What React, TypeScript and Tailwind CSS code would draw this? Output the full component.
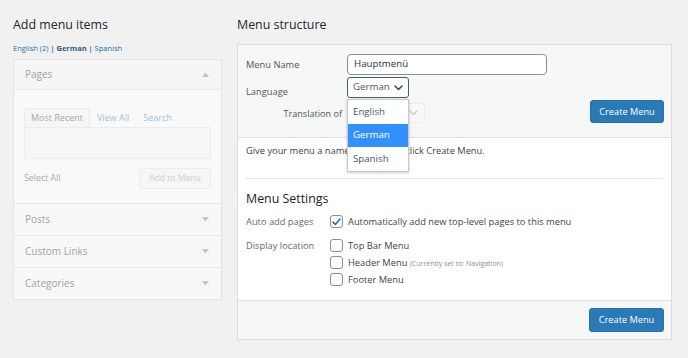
import type { ReactNode } from 'react';

function Tri({ up }: { up?: boolean }) {
  return (
    <svg width="7" height="5" viewBox="0 0 7 5" className="fill-[#c3c4c7]">
      {up ? <path d="M0 5 L3.5 0.5 L7 5 Z" /> : <path d="M0 0 L3.5 4.5 L7 0 Z" />}
    </svg>
  );
}

function Chevron({ className }: { className?: string }) {
  return (
    <svg width="9" height="6" viewBox="0 0 9 6" className={className}>
      <path d="M1 1 L4.5 4.5 L8 1" fill="none" stroke="currentColor" strokeWidth="1.6" strokeLinecap="round" strokeLinejoin="round" />
    </svg>
  );
}

function Box({ checked }: { checked?: boolean }) {
  return (
    <span className="w-[13px] h-[13px] shrink-0 rounded-[3px] border border-[#8c8f94] bg-white flex items-center justify-center">
      {checked && (
        <svg width="9" height="8" viewBox="0 0 9 8">
          <path d="M1 4.2 L3.4 6.5 L8 1" fill="none" stroke="#2271b1" strokeWidth="1.6" strokeLinecap="round" strokeLinejoin="round" />
        </svg>
      )}
    </span>
  );
}

function Row({ label, children }: { label: string; children: ReactNode }) {
  return (
    <div className="flex">
      <div className="w-[84px] shrink-0 text-[9.3px] leading-[16px] text-[#646970]">{label}</div>
      <div className="flex flex-col gap-[1px]">{children}</div>
    </div>
  );
}

function Opt({ checked, children }: { checked?: boolean; children: ReactNode }) {
  return (
    <label className="flex items-center gap-[5px] h-[16px] text-[9.3px] text-[#3c434a]">
      <Box checked={checked} />
      <span>{children}</span>
    </label>
  );
}

function Section({ title, up }: { title: string; up?: boolean }) {
  return (
    <div className="h-[32px] border-t border-[#e8e8e8] flex items-center justify-between pl-[11px] pr-[12px] bg-[#f8f8f8]">
      <span className="text-[10px] text-[#a3a3a3]">{title}</span>
      <Tri up={up} />
    </div>
  );
}

export default function App() {
  return (
    <div className="w-[688px] h-[358px] bg-[#f1f1f1] flex gap-[15px] pl-[13px] font-['Open_Sans',sans-serif] overflow-hidden">
      {/* left column */}
      <div className="w-[209px] shrink-0 flex flex-col">
        <h2 className="mt-[16px] h-[18px] leading-[18px] text-[12.4px] text-[#23282d]">Add menu items</h2>
        <div className="mt-[8px] h-[12px] leading-[12px] text-[7.5px] text-[#2271b1]">
          English (2) <span className="text-[#1d2327]">|</span> <span className="font-bold text-[#2c5e87]">German</span>{' '}
          <span className="text-[#1d2327]">|</span> Spanish
        </div>
        <div className="mt-[5px] border border-[#e3e3e3] bg-[#f8f8f8]">
          <div className="h-[30px] flex items-center justify-between pl-[11px] pr-[12px] border-b border-[#ececec] bg-[#f5f5f5]">
            <span className="text-[10px] text-[#a3a3a3]">Pages</span>
            <Tri up />
          </div>
          <div className="h-[113px] px-[10px] pt-[18px] bg-[#f9f9f9]">
            <div className="flex text-[9px] h-[19px]">
              <div className="w-[66px] border border-b-0 border-[#ececec] bg-[#f6f6f6] text-[#a8a8a8] flex items-center justify-center">
                Most Recent
              </div>
              <div className="px-[7px] flex items-center text-[#9fc3dc]">View All</div>
              <div className="px-[7px] flex items-center text-[#9fc3dc]">Search</div>
            </div>
            <div className="h-[32px] border border-[#ececec] bg-[#f6f6f6]" />
            <div className="mt-[9px] flex items-center justify-between">
              <span className="text-[8.8px] text-[#ababab]">Select All</span>
              <span className="w-[72px] h-[21px] rounded-[3px] border border-[#ececec] bg-[#f6f6f6] text-[8.6px] text-[#cfcfcf] flex items-center justify-center">
                Add to Menu
              </span>
            </div>
          </div>
          <Section title="Posts" />
          <Section title="Custom Links" />
          <Section title="Categories" />
        </div>
      </div>

      {/* right column */}
      <div className="w-[435px] shrink-0 flex flex-col">
        <h2 className="mt-[16px] h-[18px] leading-[18px] text-[12.4px] text-[#23282d]">Menu structure</h2>
        <div className="mt-[10px] border border-[#dcdcde] bg-white">
          <div className="relative bg-[#f6f7f7] border-b border-[#e0e0e0] pl-[8px] pr-[7px] pt-[9px] pb-[14px] flex justify-between items-end">
            <div className="flex flex-col">
              <div className="flex items-center">
                <span className="w-[101px] shrink-0 whitespace-nowrap text-[9.3px] text-[#50575e]">Menu Name</span>
                <div className="w-[200px] h-[21px] rounded-[4px] border border-[#8c8f94] bg-white px-[6px] flex items-center text-[9.7px] text-[#2c3338]">
                  Hauptmenü
                </div>
              </div>
              <div className="mt-[2px] flex">
                <span className="w-[101px] shrink-0 whitespace-nowrap pt-[8px] text-[9.3px] text-[#50575e]">Language</span>
                <div className="w-[62px] h-[21px] rounded-[3px] border border-[#3d5f7c] bg-white pl-[5px] pr-[5px] flex items-center justify-between text-[9.7px] text-[#4a5a68]">
                  German
                  <Chevron className="text-[#3a4f60]" />
                </div>
              </div>
              <div className="mt-[4px] flex items-center">
                <span className="w-[101px] shrink-0 whitespace-nowrap text-right pr-[5px] pt-[2px] text-[9.1px] text-[#50575e]">Translation of</span>
                <div className="w-[78px] h-[20px] rounded-[3px] border border-[#ececec] bg-[#f8f8f8] flex items-center justify-end pr-[6px]">
                  <Chevron className="text-[#d0d0d0]" />
                </div>
              </div>
            </div>
            <button className="w-[74px] h-[23px] rounded-[3px] bg-[#2a7ab8] border border-[#2271b1] text-white text-[9.2px]">
              Create Menu
            </button>
            <div className="absolute left-[109px] top-[54px] w-[62px] bg-white border border-[#c8c8c8] shadow-[0_1px_3px_rgba(0,0,0,0.2)] z-10 text-[9.7px]">
              <div className="h-[24px] pl-[5px] flex items-center text-[#40566b]">English</div>
              <div className="h-[23px] pl-[5px] flex items-center bg-[#3390ff] text-white">German</div>
              <div className="h-[24px] pl-[5px] flex items-center text-[#40566b]">Spanish</div>
            </div>
          </div>

          <div className="px-[8px] pt-[6px] pb-[12px]">
            <p className="h-[14px] leading-[14px] text-[9.3px] text-[#3c434a]">
              Give your menu a name above, then click Create Menu.
            </p>
            <div className="mt-[20px] border-t border-[#e4e4e4]" />
            <h3 className="mt-[12px] h-[16px] leading-[16px] text-[12.4px] text-[#1d2327]">Menu Settings</h3>
            <div className="mt-[7px]">
              <Row label="Auto add pages">
                <Opt checked>Automatically add new top-level pages to this menu</Opt>
              </Row>
            </div>
            <div className="mt-[8px]">
              <Row label="Display location">
                <Opt>Top Bar Menu</Opt>
                <Opt>
                  Header Menu <span className="text-[7px] text-[#8a8f94]">(Currently set to: Navigation)</span>
                </Opt>
                <Opt>Footer Menu</Opt>
              </Row>
            </div>
          </div>

          <div className="border-t border-[#e0e0e0] bg-[#f6f7f7] pr-[7px] py-[7px] flex justify-end">
            <button className="w-[75px] h-[24px] rounded-[3px] bg-[#2a7ab8] border border-[#2271b1] text-white text-[9.2px]">
              Create Menu
            </button>
          </div>
        </div>
      </div>
    </div>
  );
}
